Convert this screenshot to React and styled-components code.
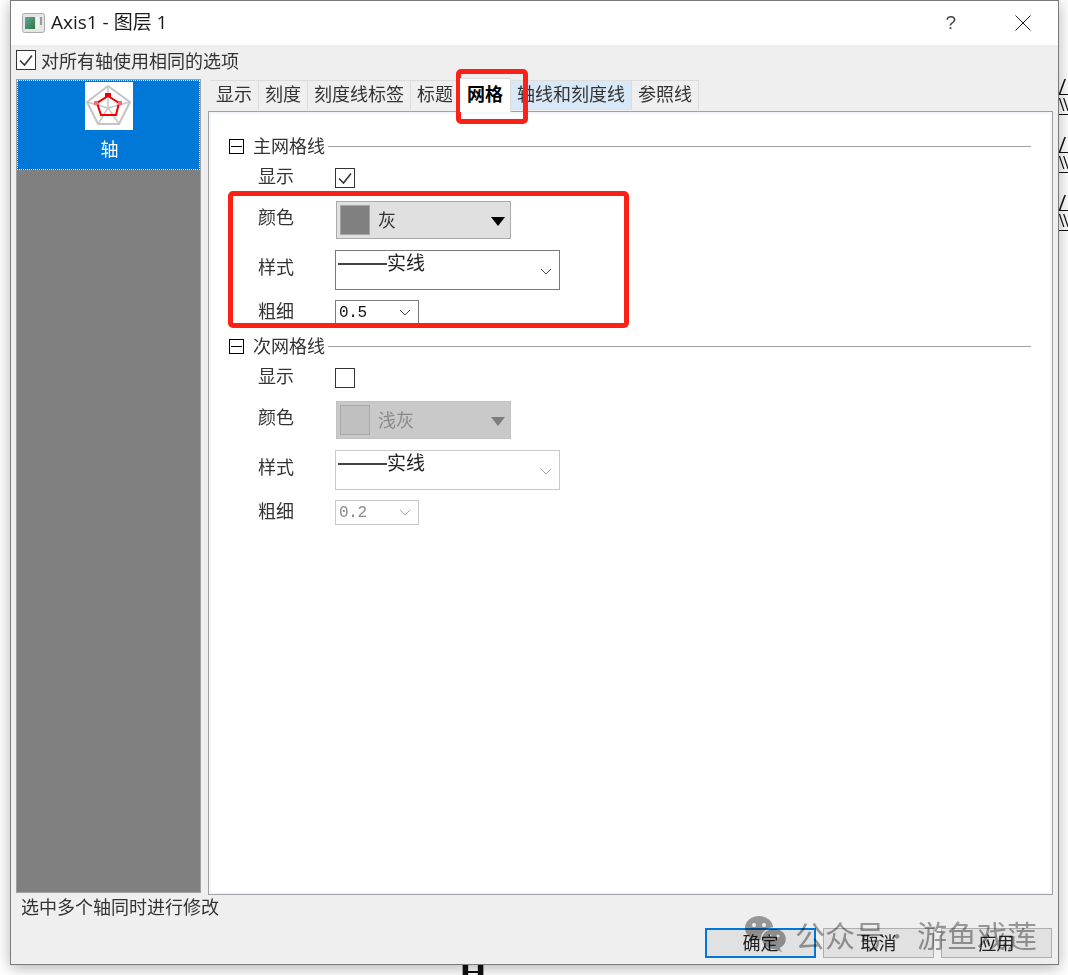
import styled, { createGlobalStyle } from "styled-components";

const UI_FONT = `"Noto Sans CJK SC", "Liberation Sans", sans-serif`;

const GlobalStyle = createGlobalStyle`
  html, body {
    margin: 0;
    background: #fff;
  }
  * {
    box-sizing: border-box;
  }
`;

const Page = styled.div`
  position: relative;
  width: 1068px;
  height: 975px;
  padding-left: 10px;
  overflow: hidden;
  font-family: ${UI_FONT};
  font-size: 18px;
  line-height: 20px;
  color: #333;
`;

// bits of the document peeking out behind the dialog
const BehindRight = styled.div`
  position: absolute;
  left: 1059px;
  top: 76px;
  width: 9px;
  overflow: hidden;
  font-family: "Liberation Serif", serif;
  font-weight: 700;
  color: #111;
`;
const BehindGlyph = styled.div`
  height: 39px;
  margin-bottom: 19px;
  white-space: nowrap;
`;
const BehindTop = styled.div`
  height: 19px;
  font-size: 24px;
  line-height: 20px;
  border-bottom: 1px solid #111;
`;
const BehindBottom = styled.div`
  height: 20px;
  font-size: 19px;
  line-height: 19px;
  letter-spacing: -1px;
  border-bottom: 1px solid #111;
`;
const BehindBottomLetter = styled.div`
  position: absolute;
  left: 459px;
  top: 952px;
  font-family: "Liberation Serif", serif;
  font-size: 36px;
  font-weight: 700;
  line-height: 40px;
  color: #111;
`;

const Window = styled.div`
  position: relative;
  display: flex;
  flex-direction: column;
  width: 1049px;
  height: 965px;
  background: #efefef;
  border: 1px solid #7b7b7b;
  box-shadow: 0 3px 14px rgba(0, 0, 0, 0.3);
`;

const TitleBar = styled.div`
  display: flex;
  align-items: center;
  flex: none;
  height: 44px;
  padding: 0 27px 0 11px;
  background: #fff;
`;
const TitleText = styled.div`
  flex: 1;
  margin: -2px 0 0 6px;
  font-family: "Open Sans", "Noto Sans CJK SC", sans-serif;
  font-size: 19px;
  color: #1a1a1a;
`;
const HelpMark = styled.div`
  margin-right: 59px;
  font-family: "Liberation Sans", sans-serif;
  font-size: 19px;
  color: #444;
`;

const AllAxesRow = styled.label`
  display: flex;
  align-items: flex-start;
  flex: none;
  height: 34px;
  padding: 5px 0 0 5px;
`;
const AllAxesText = styled.span`
  margin-left: 5px;
`;

const CheckBox = styled.span`
  display: block;
  flex: none;
  width: 20px;
  height: 20px;
  background: #fff;
  border: 1px solid #333;
`;

const Main = styled.div`
  display: flex;
  flex: none;
  height: 816px;
  padding-left: 5px;
`;

const Sidebar = styled.div`
  flex: none;
  width: 185px;
  height: 814px;
  background: #808080;
  border: 1px solid #a0a0a0;
`;
const SideItem = styled.div`
  display: flex;
  flex-direction: column;
  align-items: center;
  height: 90px;
  padding-top: 1px;
  color: #fff;
  background: #0078d7;
  border: 1px dotted #fff;
`;
const SideIcon = styled.div`
  display: flex;
  width: 48px;
  height: 48px;
  background: #fff;
`;
const SideLabel = styled.div`
  margin-top: 8px;
  padding-left: 2px;
`;

const Content = styled.div`
  display: flex;
  flex-direction: column;
  width: 845px;
  margin-left: 7px;
`;
const TabStrip = styled.div`
  display: flex;
  flex: none;
  height: 32px;
  padding: 1px 0 0 2px;
`;
const Tab = styled.div`
  position: relative;
  z-index: ${(p) => (p.$active ? 1 : 0)};
  flex: none;
  width: ${(p) => p.$width}px;
  height: ${(p) => (p.$active ? 34 : 30)}px;
  margin-top: ${(p) => (p.$active ? -2 : 0)}px;
  line-height: ${(p) => (p.$active ? 29 : 25)}px;
  text-align: center;
  font-weight: ${(p) => (p.$active ? 700 : 400)};
  color: ${(p) => (p.$active ? "#000" : "#333")};
  background: ${(p) => (p.$active ? "#fff" : p.$hot ? "#d8e8f7" : "#efefef")};
  border: 1px solid #dcdcdc;
  border-width: 1px 1px 0 0;
`;

const Panel = styled.div`
  flex: none;
  height: 784px;
  padding: 24px 21px 0 20px;
  background: #fff;
  border: 1px solid #a0a0a0;
  box-shadow: inset 0 0 0 2px #f4f6fd;
`;

const SectionHead = styled.div`
  display: flex;
  align-items: center;
  height: 20px;
  margin-top: ${(p) => p.$gap || 0}px;
`;
const Toggle = styled.span`
  display: flex;
  align-items: center;
  justify-content: center;
  flex: none;
  width: 15px;
  height: 15px;
  margin-right: 9px;
  border: 1px solid #000;

  &::after {
    content: "";
    width: 11px;
    height: 1px;
    background: #000;
  }
`;
const SectionTitle = styled.span`
  margin-top: -3px;
`;
const SectionRule = styled.span`
  flex: 1;
  height: 1px;
  margin-left: 3px;
  background: #a0a0a0;
`;

const Row = styled.div`
  display: flex;
  align-items: flex-start;
  height: ${(p) => p.$height}px;
  margin-top: ${(p) => p.$gap}px;
  padding-left: 29px;
`;
const RowLabel = styled.div`
  flex: none;
  width: 77px;
  margin-top: ${(p) => p.$nudge}px;
`;

const ColorButton = styled.div`
  display: flex;
  align-items: center;
  width: 175px;
  height: 38px;
  margin-left: 1px;
  padding: 0 5px 0 3px;
  color: ${(p) => (p.$off ? "#8a8a8a" : "#333")};
  background: ${(p) => (p.$off ? "#c9c9c9" : "#e0e0e0")};
  border: 1px solid ${(p) => (p.$off ? "#c2c2c2" : "#ababab")};
`;
const Swatch = styled.span`
  flex: none;
  width: 30px;
  height: 30px;
  margin-right: 8px;
  background: ${(p) => (p.$off ? "#c0c0c0" : "#808080")};
  border: 1px solid ${(p) => (p.$off ? "#a8a8a8" : "#a5a5a5")};
`;
const ColorName = styled.span`
  flex: 1;
  margin-top: -2px;
`;
const DropArrow = styled.span`
  width: 0;
  height: 0;
  margin-top: 2px;
  border-left: 7px solid transparent;
  border-right: 7px solid transparent;
  border-top: 9px solid ${(p) => (p.$off ? "#7d7d7d" : "#000")};
`;

const Combo = styled.div`
  display: flex;
  width: ${(p) => p.$width}px;
  height: ${(p) => p.$height}px;
  background: #fff;
  border: 1px solid ${(p) => (p.$off ? "#c9c9c9" : "#7a7a7a")};
`;
const LineStyleValue = styled.div`
  display: flex;
  flex: 1;
  align-items: flex-start;
  padding: 1px 0 0 2px;
  font-size: 19px;
  color: #222;
`;
const LineSample = styled.span`
  flex: none;
  width: 49px;
  height: 2px;
  margin-top: 11px;
  background: #444;
`;
const WeightValue = styled.div`
  flex: 1;
  padding: 2px 0 0 3px;
  font-family: "Liberation Mono", monospace;
  font-size: 16px;
  letter-spacing: -0.3px;
  color: ${(p) => (p.$off ? "#8a8a8a" : "#111")};
`;
const ChevronBox = styled.span`
  display: flex;
  align-items: center;
  justify-content: center;
  flex: none;
  width: 26px;
  padding-top: ${(p) => p.$drop || 0}px;
  color: ${(p) => (p.$off ? "#a8a8a8" : "#444")};
`;

const Footer = styled.div`
  display: flex;
  flex-direction: column;
  flex: 1;
`;
const StatusText = styled.div`
  height: 33px;
  padding: 1px 0 0 10px;
`;
const ButtonRow = styled.div`
  display: flex;
  justify-content: flex-end;
  gap: 7px;
  padding-right: 6px;
`;
const Button = styled.div`
  width: 111px;
  height: 30px;
  line-height: ${(p) => (p.$primary ? 24 : 26)}px;
  text-align: center;
  color: #222;
  background: #e1e1e1;
  border: ${(p) => (p.$primary ? "2px solid #0078d7" : "1px solid #adadad")};
`;

// red annotations and the watermark sit on top of the screenshot
const TabMark = styled.div`
  position: absolute;
  left: 456px;
  top: 69px;
  width: 72px;
  height: 55px;
  border: 5px solid #fb2117;
  border-radius: 5px;
`;
const GroupMark = styled.div`
  position: absolute;
  left: 228px;
  top: 191px;
  width: 401px;
  height: 137px;
  border: 5px solid #fb2117;
  border-radius: 5px;
`;
const Watermark = styled.div`
  position: absolute;
  left: 745px;
  top: 915px;
  display: flex;
  align-items: center;
  height: 38px;
  font-size: 30px;
  line-height: 38px;
  color: #a0a0a0;
  mix-blend-mode: multiply;
`;
const WatermarkName = styled.span`
  margin-left: 8px;
`;
const WatermarkDot = styled.span`
  width: 24px;
  margin-right: 8px;
  font-size: 22px;
  text-align: center;
`;

const TitleIcon = () => (
  <svg width="23" height="20" viewBox="0 0 23 20">
    <defs>
      <linearGradient id="pane" x1="0" y1="0" x2="1" y2="1">
        <stop offset="0" stopColor="#5fa59a" />
        <stop offset="1" stopColor="#2f7a45" />
      </linearGradient>
    </defs>
    <rect x="0.5" y="0.5" width="22" height="19" rx="2" fill="#e4e6e6" stroke="#a9adad" />
    <rect x="3" y="4" width="10" height="12" fill="url(#pane)" />
    <rect x="14" y="4" width="3" height="12" fill="#f4f4f4" />
    <rect x="18" y="4" width="2" height="8" fill="#8fa09a" />
  </svg>
);

const RadarIcon = () => (
  <svg width="48" height="48" viewBox="0 0 48 48" fill="none">
    <polygon points="23,4 45,20 34,42 13,42 2,20" stroke="#c4c4c4" strokeWidth="2" />
    <path d="M23 4V26M2 20L23 26M45 20L23 26M13 42L23 26M34 42L23 26" stroke="#c8c8c8" strokeWidth="1.5" />
    <polygon points="23,14 34,21 31,33 16,33 12,21" stroke="#f00000" strokeWidth="2" />
    <rect x="20" y="11" width="6" height="4" fill="#f00000" />
    <rect x="9" y="19" width="4" height="4" fill="#f07070" />
    <rect x="33" y="19" width="4" height="4" fill="#f07070" />
  </svg>
);

const Check = () => (
  <svg width="18" height="18" viewBox="0 0 18 18" fill="none" style={{ display: "block" }}>
    <path d="M3 9.5L7.5 14L15 4.5" stroke="#333" strokeWidth="1.5" />
  </svg>
);

const Chevron = () => (
  <svg width="12" height="7" viewBox="0 0 12 7" fill="none">
    <path d="M1 1L6 6L11 1" stroke="currentColor" />
  </svg>
);

const WeChatIcon = () => (
  <svg width="42" height="36" viewBox="0 0 42 36">
    <ellipse cx="14" cy="12" rx="14" ry="12" fill="#a0a0a0" />
    <path d="M5 20L4 27L11 22Z" fill="#a0a0a0" />
    <circle cx="9" cy="9" r="2" fill="#fff" />
    <circle cx="19" cy="9" r="2" fill="#fff" />
    <ellipse cx="29" cy="23" rx="12.5" ry="11" fill="#a0a0a0" stroke="#fff" strokeWidth="1.5" />
    <path d="M34 31L37 36L29 33Z" fill="#a0a0a0" />
    <circle cx="25" cy="20" r="1.6" fill="#fff" />
    <circle cx="33" cy="20" r="1.6" fill="#fff" />
  </svg>
);

const tabs = [
  { name: "显示", width: 49 },
  { name: "刻度", width: 49 },
  { name: "刻度线标签", width: 103 },
  { name: "标题", width: 49 },
  { name: "网格", width: 51, active: true },
  { name: "轴线和刻度线", width: 121, hot: true },
  { name: "参照线", width: 67 },
];

const GridSection = ({ title, gap, shown, colorName, weight, off }) => (
  <>
    <SectionHead $gap={gap}>
      <Toggle />
      <SectionTitle>{title}</SectionTitle>
      <SectionRule />
    </SectionHead>
    <Row $height={20} $gap={12}>
      <RowLabel $nudge={-3}>显示</RowLabel>
      <CheckBox>{shown && <Check />}</CheckBox>
    </Row>
    <Row $height={38} $gap={13}>
      <RowLabel $nudge={5}>颜色</RowLabel>
      <ColorButton $off={off}>
        <Swatch $off={off} />
        <ColorName>{colorName}</ColorName>
        <DropArrow $off={off} />
      </ColorButton>
    </Row>
    <Row $height={40} $gap={11}>
      <RowLabel $nudge={6}>样式</RowLabel>
      <Combo $width={225} $height={40} $off={off}>
        <LineStyleValue>
          <LineSample />
          实线
        </LineStyleValue>
        <ChevronBox $off={off} $drop={2}>
          <Chevron />
        </ChevronBox>
      </Combo>
    </Row>
    <Row $height={25} $gap={10}>
      <RowLabel $nudge={0}>粗细</RowLabel>
      <Combo $width={84} $height={25} $off={off}>
        <WeightValue $off={off}>{weight}</WeightValue>
        <ChevronBox $off={off}>
          <Chevron />
        </ChevronBox>
      </Combo>
    </Row>
  </>
);

const App = () => (
  <Page>
    <GlobalStyle />
    <BehindRight>
      {[0, 1, 2].map((i) => (
        <BehindGlyph key={i}>
          <BehindTop>/</BehindTop>
          <BehindBottom>{"\\\\"}</BehindBottom>
        </BehindGlyph>
      ))}
    </BehindRight>
    <BehindBottomLetter>H</BehindBottomLetter>
    <Window>
      <TitleBar>
        <TitleIcon />
        <TitleText>Axis1 - 图层 1</TitleText>
        <HelpMark>?</HelpMark>
        <svg width="16" height="16" viewBox="0 0 16 16" fill="none">
          <path d="M0.5 0.5L15.5 15.5M15.5 0.5L0.5 15.5" stroke="#222" />
        </svg>
      </TitleBar>
      <AllAxesRow>
        <CheckBox>
          <Check />
        </CheckBox>
        <AllAxesText>对所有轴使用相同的选项</AllAxesText>
      </AllAxesRow>
      <Main>
        <Sidebar>
          <SideItem>
            <SideIcon>
              <RadarIcon />
            </SideIcon>
            <SideLabel>轴</SideLabel>
          </SideItem>
        </Sidebar>
        <Content>
          <TabStrip>
            {tabs.map((tab) => (
              <Tab key={tab.name} $width={tab.width} $active={tab.active} $hot={tab.hot}>
                {tab.name}
              </Tab>
            ))}
          </TabStrip>
          <Panel>
            <GridSection title="主网格线" shown colorName="灰" weight="0.5" />
            <GridSection title="次网格线" gap={11} colorName="浅灰" weight="0.2" off />
          </Panel>
        </Content>
      </Main>
      <Footer>
        <StatusText>选中多个轴同时进行修改</StatusText>
        <ButtonRow>
          <Button $primary>确定</Button>
          <Button>取消</Button>
          <Button>应用</Button>
        </ButtonRow>
      </Footer>
    </Window>
    <TabMark />
    <GroupMark />
    <Watermark>
      <WeChatIcon />
      <WatermarkName>公众号</WatermarkName>
      <WatermarkDot>·</WatermarkDot>
      <span>游鱼戏莲</span>
    </Watermark>
  </Page>
);

export default App;
